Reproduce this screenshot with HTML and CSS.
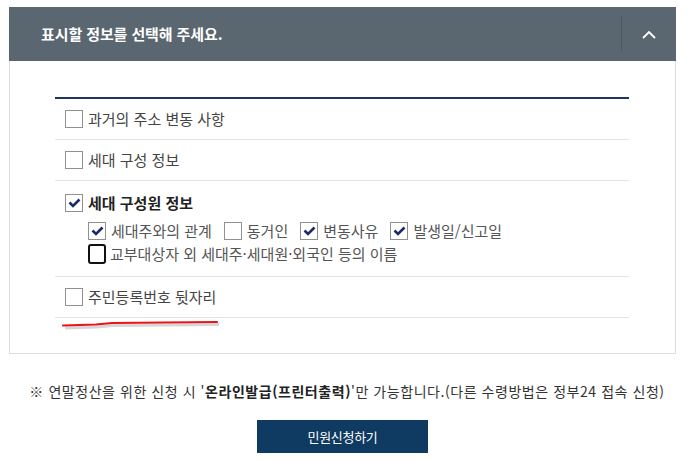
FILE: index.html
```html
<!DOCTYPE html>
<html lang="ko">
<head>
<meta charset="utf-8">
<link rel="stylesheet" href="styles.css">
</head>
<body>
<div class="page">
<div class="panel">
  <div class="panel-head">
    <h2 class="panel-title">표시할 정보를 선택해 주세요.</h2>
    <div class="head-toggle">
      <svg width="14" height="9" viewBox="0 0 14 9"><polyline points="1,8 7,2 13,8" fill="none" stroke="#fff" stroke-width="1.8"/></svg>
    </div>
  </div>
  <div class="panel-body">
    <ul class="opt-list">
      <li class="opt-row">
        <span class="cb"></span><span class="opt-label">과거의 주소 변동 사항</span>
      </li>
      <li class="opt-row">
        <span class="cb"></span><span class="opt-label">세대 구성 정보</span>
      </li>
      <li class="opt-row opt-group">
        <div class="opt-line">
          <span class="cb checked"><svg width="13" height="10" viewBox="0 0 13 10"><polyline points="1.5,4.5 5,8 11.5,1.5" fill="none" stroke="#1b2a6b" stroke-width="2.6"/></svg></span><span class="opt-label strong">세대 구성원 정보</span>
        </div>
        <div class="sub-line">
          <span class="cb checked"><svg width="13" height="10" viewBox="0 0 13 10"><polyline points="1.5,4.5 5,8 11.5,1.5" fill="none" stroke="#1b2a6b" stroke-width="2.6"/></svg></span><span class="sub-label">세대주와의 관계</span>
          <span class="cb"></span><span class="sub-label">동거인</span>
          <span class="cb checked"><svg width="13" height="10" viewBox="0 0 13 10"><polyline points="1.5,4.5 5,8 11.5,1.5" fill="none" stroke="#1b2a6b" stroke-width="2.6"/></svg></span><span class="sub-label">변동사유</span>
          <span class="cb checked"><svg width="13" height="10" viewBox="0 0 13 10"><polyline points="1.5,4.5 5,8 11.5,1.5" fill="none" stroke="#1b2a6b" stroke-width="2.6"/></svg></span><span class="sub-label">발생일/신고일</span>
        </div>
        <div class="sub-line">
          <span class="cb focused"></span><span class="sub-label tight">교부대상자 외 세대주·세대원·외국인 등의 이름</span>
        </div>
      </li>
      <li class="opt-row">
        <span class="cb"></span><span class="opt-label">주민등록번호 뒷자리</span>
      </li>
    </ul>
    <div class="mark">
      <svg width="170" height="12" viewBox="0 0 170 12">
        <path d="M8,8.5 L40,7.5 L56,6 L162,5" fill="none" stroke="#777" stroke-width="3" opacity="0.3" transform="translate(1,1.5)"/>
        <path d="M7,7.5 L40,6.5 L56,5 L161,4" fill="none" stroke="#e8141c" stroke-width="2.2" stroke-linecap="round"/>
      </svg>
    </div>
  </div>
</div>
<p class="notice">※ 연말정산을 위한 신청 시 '<b>온라인발급(프린터출력)</b>'만 가능합니다.(다른 수령방법은 정부24 접속 신청)</p>
<div class="actions">
  <button class="btn-apply" type="button">민원신청하기</button>
</div>
</div>
</body>
</html>
```
FILE: styles.css
```css
html, body {
  margin: 0;
  padding: 0;
  background: #fff;
}
body {
  font-family: "Noto Sans CJK KR", "Noto Sans", sans-serif;
  color: #333;
}
.page {
  width: 667px;
  margin: 7px 0 0 9px;
}
.panel {
  border: 1px solid #dcdcdc;
  border-top: none;
}
.panel-head {
  display: flex;
  align-items: center;
  height: 54px;
  background: #5a6670;
  margin: 0 -1px;
}
.panel-title {
  flex: 1;
  margin: 0;
  padding-left: 32px;
  font-size: 15px;
  font-weight: 700;
  letter-spacing: -0.1px;
  color: #fff;
  line-height: 20px;
}
.head-toggle {
  width: 54px;
  height: 36px;
  border-left: 1px solid #4a5a6e;
  display: flex;
  align-items: center;
  justify-content: center;
}
.panel-body {
  padding: 36px 46px 0 45px;
}
.opt-list {
  list-style: none;
  margin: 0;
  padding: 0;
  border-top: 2px solid #1e3462;
}
.opt-row {
  display: flex;
  align-items: center;
  height: 40px;
  padding-left: 10px;
  border-bottom: 1px solid #e3e3e3;
}
.opt-group {
  display: block;
  height: auto;
  padding-top: 12px;
  padding-bottom: 11px;
}
.opt-line,
.sub-line {
  display: flex;
  align-items: center;
}
.opt-line {
  height: 20px;
  margin-bottom: 6px;
}
.sub-line {
  height: 23px;
  padding-left: 23px;
}
.cb {
  flex: none;
  box-sizing: border-box;
  width: 18px;
  height: 18px;
  border: 1px solid #919191;
  background: #fff;
  display: inline-flex;
  align-items: center;
  justify-content: center;
}
.cb.focused {
  border: 2px solid #111;
  border-radius: 3px;
  height: 20px;
}
.opt-label {
  margin-left: 5px;
  font-size: 15px;
  color: #444;
  line-height: 20px;
}
.opt-label.strong {
  font-weight: 700;
  color: #222;
}
.sub-label {
  margin-left: 5px;
  margin-right: 12px;
  font-size: 15px;
  letter-spacing: 0;
  color: #555;
  line-height: 20px;
}
.sub-label.tight {
  margin-left: 4px;
}
.mark {
  height: 35px;
  padding-left: 1px;
}
.mark svg {
  display: block;
}
.notice {
  margin: 27px -9px 0 0;
  text-align: center;
  font-size: 14px;
  letter-spacing: 0.55px;
  color: #333;
  line-height: 20px;
}
.notice b {
  font-weight: 700;
  color: #222;
}
.actions {
  display: flex;
  justify-content: center;
  margin-top: 19px;
}
.btn-apply {
  width: 171px;
  height: 33px;
  border: none;
  background: #0f3a62;
  color: #fff;
  font-family: "Noto Sans CJK KR", "Noto Sans", sans-serif;
  font-size: 13px;
  letter-spacing: -0.3px;
  cursor: pointer;
}
```
